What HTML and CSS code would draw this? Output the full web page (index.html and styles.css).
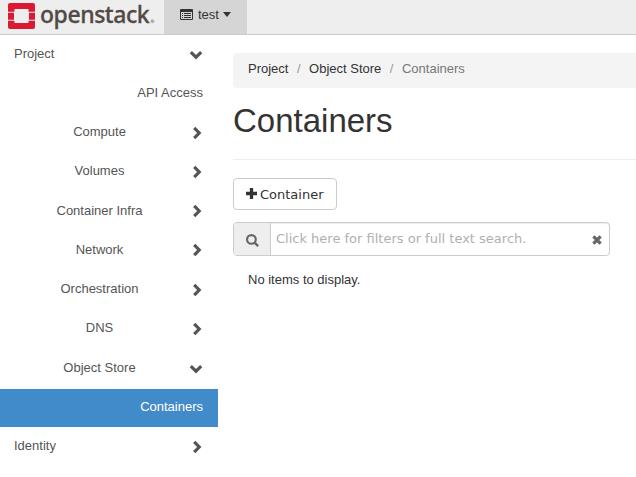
FILE: index.html
```html
<!DOCTYPE html>
<html lang="en">
<head>
<meta charset="utf-8">
<title>Containers</title>
<link rel="stylesheet" href="styles.css">
</head>
<body>
<svg class="defs" width="0" height="0">
  <symbol id="right" viewBox="0 0 10 14"><path d="M2.200 1.800 7.200 7 2.200 12.200" fill="none" stroke="currentColor" stroke-width="3.200"/></symbol>
  <symbol id="down" viewBox="0 0 14 10"><path d="M1.800 2.200 7 7.200 12.200 2.200" fill="none" stroke="currentColor" stroke-width="3.200"/></symbol>
</svg>
<header class="topbar">
  <a class="brand">
    <svg class="mark" viewBox="0 0 27 26">
      <path fill="#da1a32" d="M2 0H25Q27 0 27 2V8.700H20.500V6H6.500V8.700H0V2Q0 0 2 0ZM0 9.700H6V16.800H0ZM21 9.700H27V16.800H21ZM0 17.800H6.500V20H20.500V17.800H27V24Q27 26 25 26H2Q0 26 0 24Z"/>
    </svg>
    <span class="wordmark">openstack<span class="dot">.</span></span>
  </a>
  <button class="project">
    <svg class="list" viewBox="0 0 13 11"><path fill="currentColor" fill-rule="evenodd" d="M1 0H12Q13 0 13 1V10Q13 11 12 11H1Q0 11 0 10V1Q0 0 1 0ZM1 3V10H12V3ZM2 4H3V5H2ZM4 4H11V5H4ZM2 6H3V7H2ZM4 6H11V7H4ZM2 8H3V9H2ZM4 8H11V9H4Z"/></svg>
    <span>test</span>
    <i class="caret"></i>
  </button>
</header>
<div class="layout">
  <nav class="sidebar">
    <a class="item top"><span>Project</span><svg class="down"><use href="#down"/></svg></a>
    <a class="item leaf"><span>API Access</span></a>
    <a class="item"><span>Compute</span><svg class="right"><use href="#right"/></svg></a>
    <a class="item"><span>Volumes</span><svg class="right"><use href="#right"/></svg></a>
    <a class="item"><span>Container Infra</span><svg class="right"><use href="#right"/></svg></a>
    <a class="item"><span>Network</span><svg class="right"><use href="#right"/></svg></a>
    <a class="item"><span>Orchestration</span><svg class="right"><use href="#right"/></svg></a>
    <a class="item"><span>DNS</span><svg class="right"><use href="#right"/></svg></a>
    <a class="item"><span>Object Store</span><svg class="down"><use href="#down"/></svg></a>
    <a class="item leaf active"><span>Containers</span></a>
    <a class="item top"><span>Identity</span><svg class="right"><use href="#right"/></svg></a>
  </nav>
  <main class="content">
    <ol class="breadcrumb"><li>Project</li><li>Object Store</li><li class="current">Containers</li></ol>
    <h1>Containers</h1>
    <button class="create">
      <svg class="plus" viewBox="0 0 10 10"><path fill="currentColor" d="M3.500 0H6.500V3.500H10V6.500H6.500V10H3.500V6.500H0V3.500H3.500Z"/></svg>
      <span>Container</span>
    </button>
    <div class="search">
      <span class="addon"><svg class="lens" viewBox="0 0 12 12"><circle cx="5" cy="5" r="4" fill="none" stroke="currentColor" stroke-width="2"/><path d="M8 8 11.200 11.200" stroke="currentColor" stroke-width="2.200"/></svg></span>
      <span class="placeholder">Click here for filters or full text search.</span>
      <svg class="clear" viewBox="0 0 10 10"><path d="M1.400 1.400 8.600 8.600M8.600 1.400 1.400 8.600" stroke="currentColor" stroke-width="3.200"/></svg>
    </div>
    <p class="empty">No items to display.</p>
  </main>
</div>
</body>
</html>
```
FILE: styles.css
```css
* { box-sizing: border-box; }
body {
  margin: 0;
  height: 477px;
  overflow: hidden;
  background: #fff;
  color: #333;
  font: 13px/18px "Liberation Sans", Arial, sans-serif;
}
button { font: inherit; color: inherit; }
svg { display: block; flex: none; }
.defs { position: absolute; }
.topbar {
  display: flex;
  height: 35px;
  background: #eee;
  border-bottom: 1px solid #ccc;
}
.brand {
  display: flex;
  align-items: flex-start;
  width: 164px;
  padding: 0 0 0 8px;
}
.mark { width: 27px; height: 26px; margin-top: 3px; }
.wordmark {
  margin-left: 5px;
  color: #524a45;
  font: 500 23px/29px "Noto Sans", "Open Sans", sans-serif;
  letter-spacing: -0.45px;
  -webkit-text-stroke: 0.3px currentColor;
}
.dot { color: #aaa; }
.project {
  display: flex;
  align-items: center;
  width: 83px;
  height: 34px;
  padding: 0 0 5px 16px;
  border: 0;
  background: #d5d5d5;
}
.list { width: 13px; height: 11px; margin-right: 5px; }
.caret {
  margin-left: 4px;
  border: 4px solid transparent;
  border-top: 5px solid #333;
  border-bottom: 0;
}
.layout { display: flex; }
.sidebar { width: 218px; padding-top: 0.9px; color: #555; }
.item {
  display: flex;
  align-items: center;
  height: 38.25px;
  margin-bottom: 1px;
  padding: 0 15px 0 14px;
}
.item span { flex: 1; padding-bottom: 2.9px; text-align: center; }
.top span { text-align: left; }
.leaf span { text-align: right; }
.active { background: #428bca; color: #fff; }
.right { width: 10px; height: 14px; margin: 0 1px 2px 7px; }
.down { width: 14px; height: 10px; margin: 0 0 0 4px; }
.content { flex: 1; padding: 18px 0 0 15px; }
.breadcrumb {
  display: flex;
  height: 35px;
  margin: 0;
  padding: 7px 15px;
  border-radius: 4px 0 0 4px;
  background: #f4f4f4;
  list-style: none;
}
.breadcrumb li + li::before { content: "/"; padding: 0 8.5px; color: #999; }
.breadcrumb .current { color: #777; }
h1 {
  height: 72px;
  margin: 0 0 18px;
  padding-top: 14px;
  border-bottom: 1px solid #eee;
  font-size: 33px;
  font-weight: 400;
  line-height: 37px;
}
.create {
  display: flex;
  align-items: center;
  width: 104px;
  height: 32px;
  padding: 0 0 0 12px;
  border: 1px solid #ccc;
  border-radius: 4px;
  background: #fff;
  font: 13px/18px "DejaVu Sans", sans-serif;
}
.create span { padding-top: 1px; }
.plus { width: 11px; height: 11px; margin: 0 3px 1px 0; }
.search {
  display: flex;
  align-items: center;
  width: 377px;
  height: 34px;
  margin-top: 12px;
  border: 1px solid #ccc;
  border-radius: 4px;
  box-shadow: inset 0 1px 1px rgba(0, 0, 0, .075);
  color: #666;
}
.addon {
  display: flex;
  align-items: center;
  justify-content: center;
  width: 37px;
  height: 32px;
  padding-top: 2px;
  border-right: 1px solid #ccc;
  border-radius: 3px 0 0 3px;
  background: #eee;
}
.lens { width: 13px; height: 13px; }
.placeholder {
  flex: 1;
  padding: 0 0 0 5px;
  color: #b0b0b0;
  font: 13px/18px "DejaVu Sans", sans-serif;
}
.clear { width: 10px; height: 10px; margin: 2px 7px 0 0; }
.empty { margin: 15px 0 0 15px; }
```
